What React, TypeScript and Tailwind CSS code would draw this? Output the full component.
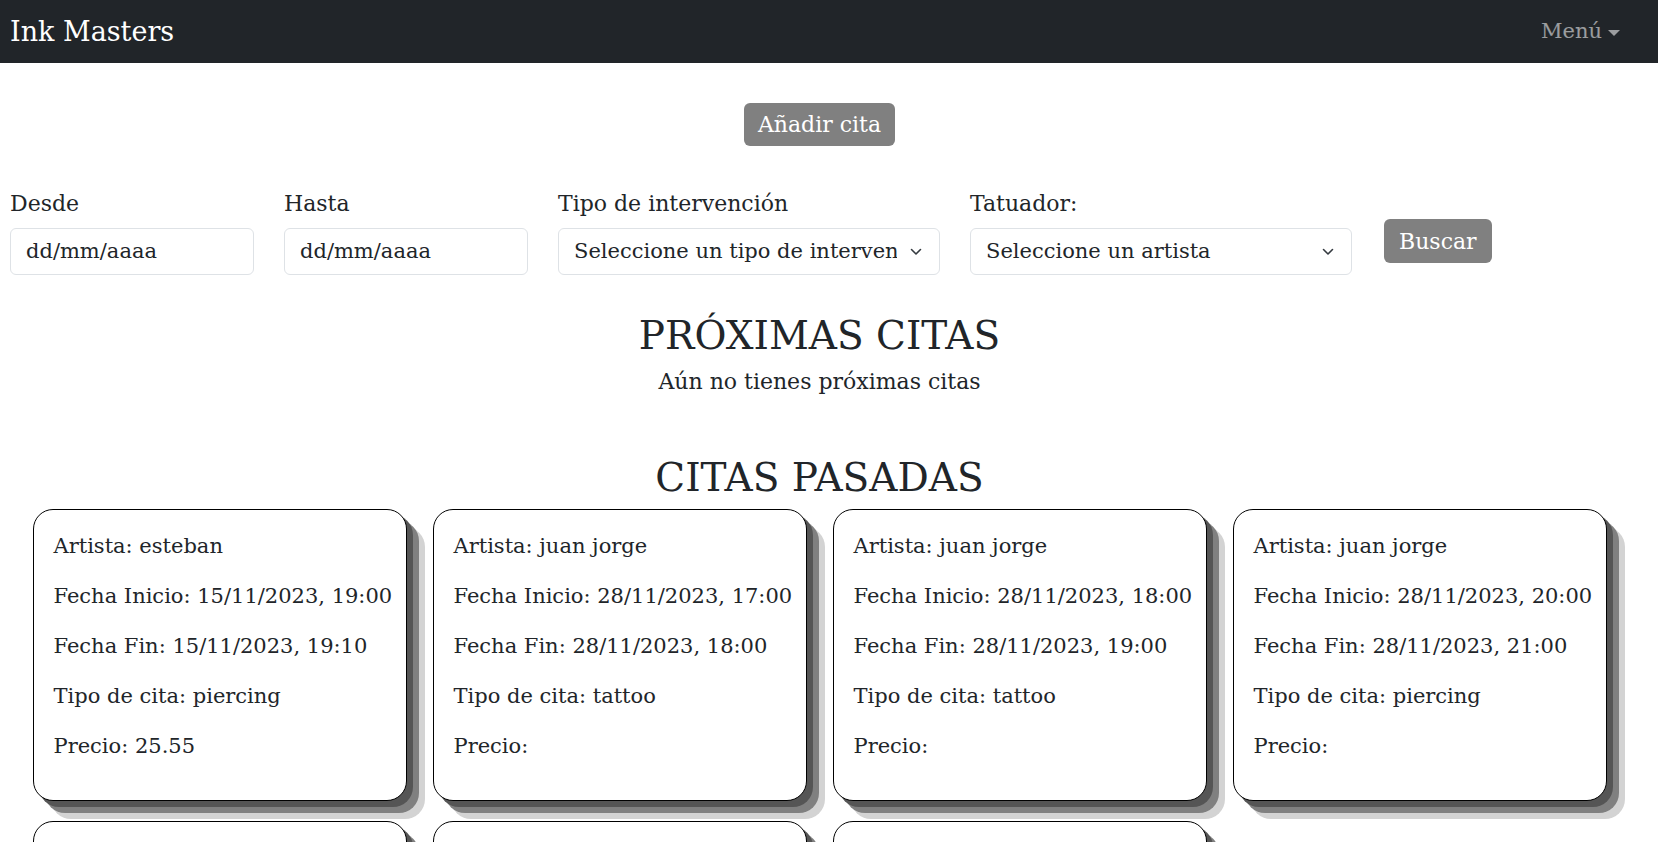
interface Cita {
  artista: string;
  inicio: string;
  fin: string;
  tipo: string;
  precio: string;
}

const citasPasadas: Cita[] = [
  { artista: "esteban", inicio: "15/11/2023, 19:00", fin: "15/11/2023, 19:10", tipo: "piercing", precio: "25.55" },
  { artista: "juan jorge", inicio: "28/11/2023, 17:00", fin: "28/11/2023, 18:00", tipo: "tattoo", precio: "" },
  { artista: "juan jorge", inicio: "28/11/2023, 18:00", fin: "28/11/2023, 19:00", tipo: "tattoo", precio: "" },
  { artista: "juan jorge", inicio: "28/11/2023, 20:00", fin: "28/11/2023, 21:00", tipo: "piercing", precio: "" },
  { artista: "esteban", inicio: "30/11/2023, 10:00", fin: "30/11/2023, 11:00", tipo: "tattoo", precio: "" },
  { artista: "juan jorge", inicio: "01/12/2023, 17:00", fin: "01/12/2023, 18:00", tipo: "tattoo", precio: "" },
  { artista: "juan jorge", inicio: "02/12/2023, 12:00", fin: "02/12/2023, 13:00", tipo: "piercing", precio: "" },
];

function Chevron() {
  return (
    <svg width="12" height="8" viewBox="0 0 12 8" fill="none" className="shrink-0">
      <path d="M1.5 1.5 6 6 10.5 1.5" stroke="#343a40" strokeWidth="1.6" strokeLinecap="round" strokeLinejoin="round" />
    </svg>
  );
}

function DateField({ label }: { label: string }) {
  return (
    <div className="flex w-[244px] flex-col">
      <label className="mb-[8px] text-[22px] leading-[33px]">{label}</label>
      <div className="flex h-[47px] items-center rounded-[6px] border border-[#dee2e6] bg-white pl-[15px] text-[21px]">
        dd/mm/aaaa
      </div>
    </div>
  );
}

function SelectField({ label, placeholder }: { label: string; placeholder: string }) {
  return (
    <div className="flex w-[382px] flex-col">
      <label className="mb-[8px] text-[22px] leading-[33px]">{label}</label>
      <div className="flex h-[47px] items-center rounded-[6px] border border-[#dee2e6] bg-white pl-[15px] pr-[17px] text-[21px]">
        <span className="flex-1 overflow-hidden whitespace-nowrap">{placeholder}</span>
        <span className="ml-[13px]">
          <Chevron />
        </span>
      </div>
    </div>
  );
}

function CitaCard({ cita }: { cita: Cita }) {
  return (
    <div className="rounded-[20px] border border-black bg-white px-[20px] pt-[20px] pb-[20px] text-[21px] leading-[32px] whitespace-nowrap shadow-[6px_6px_0_#555555,12px_12px_0_#808080,18px_18px_0_#d3d3d3]">
      <p className="mb-[18px]">Artista: {cita.artista}</p>
      <p className="mb-[18px]">Fecha Inicio: {cita.inicio}</p>
      <p className="mb-[18px]">Fecha Fin: {cita.fin}</p>
      <p className="mb-[18px]">Tipo de cita: {cita.tipo}</p>
      <p className="mb-[18px]">Precio: {cita.precio}</p>
    </div>
  );
}

export default function App() {
  return (
    <div className="h-[842px] overflow-hidden bg-white font-['DejaVu_Serif',serif] text-[#212529]">
      {/* Navbar */}
      <nav className="flex h-[63px] items-center justify-between bg-[#212529] pl-[10px] pr-[38px]">
        <span className="text-[27px] leading-none text-white">Ink Masters</span>
        <span className="flex items-center text-[21px] text-white/55">
          Menú
          <span className="ml-[6px] mt-[2px] border-x-[6px] border-t-[6px] border-x-transparent border-t-current" />
        </span>
      </nav>

      <main className="pr-[19px]">
        <div className="flex justify-center pt-[40px]">
          <button className="h-[43px] rounded-[6px] bg-[#808080] px-[14px] text-[22px] text-white">
            Añadir cita
          </button>
        </div>

        {/* Filters */}
        <div className="mt-[41px] flex items-end gap-[30px] pl-[10px]">
          <DateField label="Desde" />
          <DateField label="Hasta" />
          <SelectField label="Tipo de intervención" placeholder="Seleccione un tipo de intervención" />
          <SelectField label="Tatuador:" placeholder="Seleccione un artista" />
          <button className="mb-[12px] ml-[2px] h-[44px] rounded-[6px] bg-[#808080] px-[15px] text-[22px] text-white">
            Buscar
          </button>
        </div>

        <section className="mt-[38px] text-center">
          <h1 className="text-[39px] leading-[46px]">PRÓXIMAS CITAS</h1>
          <p className="mt-[7px] text-[22px] leading-[32px]">Aún no tienes próximas citas</p>
        </section>

        <section className="mt-[57px]">
          <h1 className="text-center text-[39px] leading-[46px]">CITAS PASADAS</h1>
          <div className="mt-[8px] grid grid-cols-[repeat(4,374px)] justify-center gap-x-[26px] gap-y-[20px]">
            {citasPasadas.map((cita, i) => (
              <CitaCard key={i} cita={cita} />
            ))}
          </div>
        </section>
      </main>
    </div>
  );
}
